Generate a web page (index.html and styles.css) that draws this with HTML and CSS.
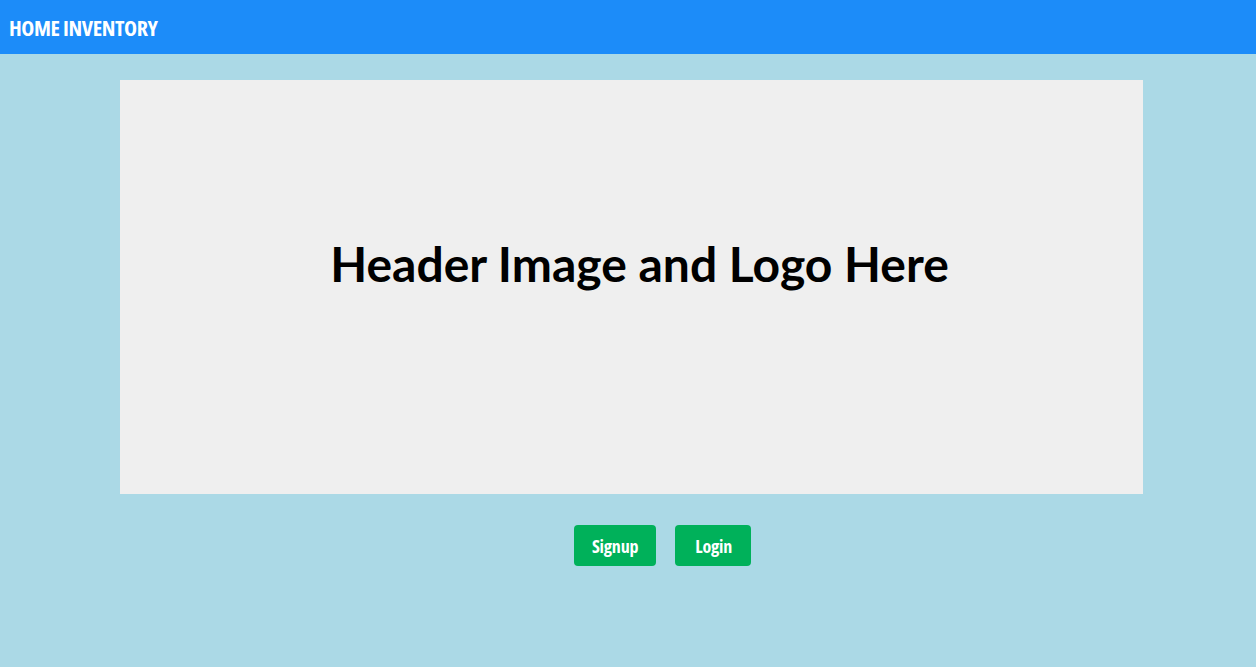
FILE: index.html
```html
<!DOCTYPE html>
<html>
<head>
<meta charset="utf-8">
<title>Home Inventory</title>
<link rel="stylesheet" href="styles.css">
</head>
<body>
<nav class="navbar">
  <span class="brand">HOME INVENTORY</span>
</nav>
<main class="main">
  <section class="hero">
    <h1 class="hero-title">Header Image and Logo Here</h1>
  </section>
  <div class="actions">
    <button class="btn">Signup</button>
    <button class="btn">Login</button>
  </div>
</main>
</body>
</html>
```
FILE: styles.css
```css
* { box-sizing: border-box; }
html, body { margin: 0; padding: 0; }
body {
  background: #abd9e6;
  height: 667px;
  overflow: hidden;
  font-family: "Open Sans", "DejaVu Sans", sans-serif;
}
.navbar {
  height: 54px;
  background: #1c8cf9;
  display: flex;
  align-items: center;
  padding-left: 9px;
}
.brand {
  color: #fff;
  font-weight: 700;
  font-size: 22px;
  font-stretch: 75%;
  letter-spacing: -0.4px;
}
.main {
  padding: 26px 113px 0 120px;
}
.hero {
  height: 414px;
  background: #efefef;
  display: flex;
  align-items: center;
  justify-content: center;
}
.hero-title {
  margin: 0 0 48px 16px;
  font-family: "Lato", "Open Sans", sans-serif;
  font-weight: 700;
  font-size: 48px;
  letter-spacing: 0;
  color: #000;
}
.actions {
  display: flex;
  justify-content: center;
  gap: 19px;
  margin-top: 31px;
  padding-left: 62px;
}
.btn {
  height: 41px;
  padding: 0 18px;
  border: none;
  border-radius: 4px;
  background: #00b15a;
  color: #fff;
  font-family: "Open Sans", "DejaVu Sans", sans-serif;
  font-stretch: 75%;
  font-weight: 700;
  font-size: 18px;
  letter-spacing: -0.2px;
}
.btn + .btn {
  padding: 0 19px 0 20px;
}
```
